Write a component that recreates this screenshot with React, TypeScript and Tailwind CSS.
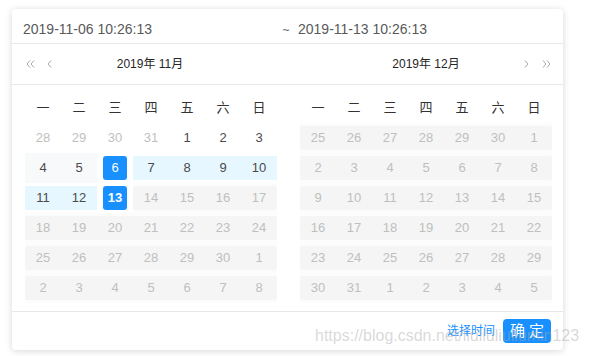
import React from "react";

type Kind = "plain" | "muted" | "hover" | "sel" | "today" | "range" | "off";
type Cell = { d: number; k: Kind };

const weekDays = ["一", "二", "三", "四", "五", "六", "日"];

function row(nums: number[], kinds: Kind[]): Cell[] {
  return nums.map((d, i) => ({ d, k: kinds[i] }));
}
const off7: Kind[] = ["off", "off", "off", "off", "off", "off", "off"];

const leftRows: Cell[][] = [
  row([28, 29, 30, 31, 1, 2, 3], ["muted", "muted", "muted", "muted", "plain", "plain", "plain"]),
  row([4, 5, 6, 7, 8, 9, 10], ["hover", "hover", "sel", "range", "range", "range", "range"]),
  row([11, 12, 13, 14, 15, 16, 17], ["range", "range", "today", "off", "off", "off", "off"]),
  row([18, 19, 20, 21, 22, 23, 24], off7),
  row([25, 26, 27, 28, 29, 30, 1], off7),
  row([2, 3, 4, 5, 6, 7, 8], off7),
];

const rightRows: Cell[][] = [
  row([25, 26, 27, 28, 29, 30, 1], off7),
  row([2, 3, 4, 5, 6, 7, 8], off7),
  row([9, 10, 11, 12, 13, 14, 15], off7),
  row([16, 17, 18, 19, 20, 21, 22], off7),
  row([23, 24, 25, 26, 27, 28, 29], off7),
  row([30, 31, 1, 2, 3, 4, 5], off7),
];

function DateCell({ cell, prev, next }: { cell: Cell; prev?: Kind; next?: Kind }) {
  const { d, k } = cell;
  if (k === "sel" || k === "today") {
    return (
      <div className="w-[36px] h-[30px] flex items-center justify-center">
        <div
          className={`w-[24px] h-[24px] rounded-[3px] bg-[#1890ff] text-white flex items-center justify-center ${
            k === "today" ? "font-bold" : ""
          }`}
        >
          {d}
        </div>
      </div>
    );
  }
  if (k === "off") {
    const first = prev !== "off";
    const last = next !== "off";
    return (
      <div className="w-[36px] h-[30px] flex items-center bg-[#fcfcfc]">
        <div
          className={`w-full h-[24px] flex items-center justify-center bg-[#f5f5f5] text-[#bfbfbf] ${
            first ? "rounded-l-[3px]" : ""
          } ${last ? "rounded-r-[3px]" : ""}`}
        >
          {d}
        </div>
      </div>
    );
  }
  if (k === "range") {
    return (
      <div className="w-[36px] h-[30px] flex items-center">
        <div className="w-full h-[24px] flex items-center justify-center bg-[#e6f7ff] text-[#4a4a4a]">{d}</div>
      </div>
    );
  }
  return (
    <div
      className={`w-[36px] h-[30px] flex items-center justify-center ${
        k === "hover" ? "bg-[#f8f9fb] text-[#4a4a4a]" : k === "muted" ? "text-[#bfbfbf]" : "text-[#4a4a4a]"
      }`}
    >
      {d}
    </div>
  );
}

function Chevron({ dir, double }: { dir: "l" | "r"; double?: boolean }) {
  const one = dir === "l" ? "M4 0.5 L1 4 L4 7.5" : "M1 0.5 L4 4 L1 7.5";
  const two = dir === "l" ? "M8 0.5 L5 4 L8 7.5" : "M5 0.5 L8 4 L5 7.5";
  return (
    <svg width={double ? 9 : 5} height="8" viewBox={double ? "0 0 9 8" : "0 0 5 8"} fill="none">
      <path d={one} stroke="#a6a6a6" strokeWidth="1" />
      {double && <path d={two} stroke="#a6a6a6" strokeWidth="1" />}
    </svg>
  );
}

function Calendar({ rows }: { rows: Cell[][] }) {
  return (
    <div className="w-[252px] pt-[11px]">
      <div className="flex h-[24px] mb-[3px] text-[13px] text-[#333]">
        {weekDays.map((w) => (
          <div key={w} className="w-[36px] flex items-center justify-center">
            {w}
          </div>
        ))}
      </div>
      {rows.map((r, ri) => (
        <div key={ri} className="flex text-[13px]">
          {r.map((c, ci) => (
            <DateCell key={ci} cell={c} prev={r[ci - 1]?.k} next={r[ci + 1]?.k} />
          ))}
        </div>
      ))}
    </div>
  );
}

export default function App() {
  return (
    <div className="relative w-[589px] h-[356px] bg-white pt-[9px] pl-[12px] font-['Liberation_Sans','Noto_Sans_CJK_SC',sans-serif]">
      <div className="w-[551px] h-[341px] rounded-[4px] bg-white shadow-[0_1px_7px_rgba(0,0,0,0.16)] flex flex-col">
        <div className="h-[35px] pt-[7px] border-b border-[#e8e8e8] flex items-center text-[14px] text-[#595959]">
          <span className="w-[265px] pl-[11px]">2019-11-06 10:26:13</span>
          <span className="w-[18px] text-center text-[12px] text-[#666]">~</span>
          <span className="pl-[3px]">2019-11-13 10:26:13</span>
        </div>
        <div className="h-[41px] border-b border-[#e8e8e8] flex items-center text-[12px] text-[#262626]">
          <div className="w-[276px] pl-[14px] flex items-center">
            <div className="flex items-center gap-[12px] w-[40px]">
              <Chevron dir="l" double />
              <Chevron dir="l" />
            </div>
            <div className="w-[168px] text-center">2019年 11月</div>
          </div>
          <div className="w-[275px] pl-[12px] flex items-center">
            <div className="w-[40px]" />
            <div className="w-[172px] text-center">2019年 12月</div>
            <div className="flex items-center gap-[13px] pl-[12px]">
              <Chevron dir="r" />
              <Chevron dir="r" double />
            </div>
          </div>
        </div>
        <div className="flex flex-1">
          <div className="w-[276px] pl-[13px]">
            <Calendar rows={leftRows} />
          </div>
          <div className="w-[275px] pl-[12px]">
            <Calendar rows={rightRows} />
          </div>
        </div>
        <div className="h-[39px] border-t border-[#e8e8e8] flex items-center justify-end pr-[12px]">
          <span className="text-[12px] text-[#1890ff] mr-[8px]">选择时间</span>
          <button className="w-[48px] h-[24px] rounded-[4px] bg-[#1890ff] text-white text-[15px] flex items-center justify-center">
            确 定
          </button>
        </div>
      </div>
      <div className="absolute left-[315px] top-[327px] text-[16px] leading-[18px] text-[rgba(170,170,170,0.45)] whitespace-nowrap pointer-events-none">
        https://blog.csdn.net/liuliuliuliumin123
      </div>
    </div>
  );
}
